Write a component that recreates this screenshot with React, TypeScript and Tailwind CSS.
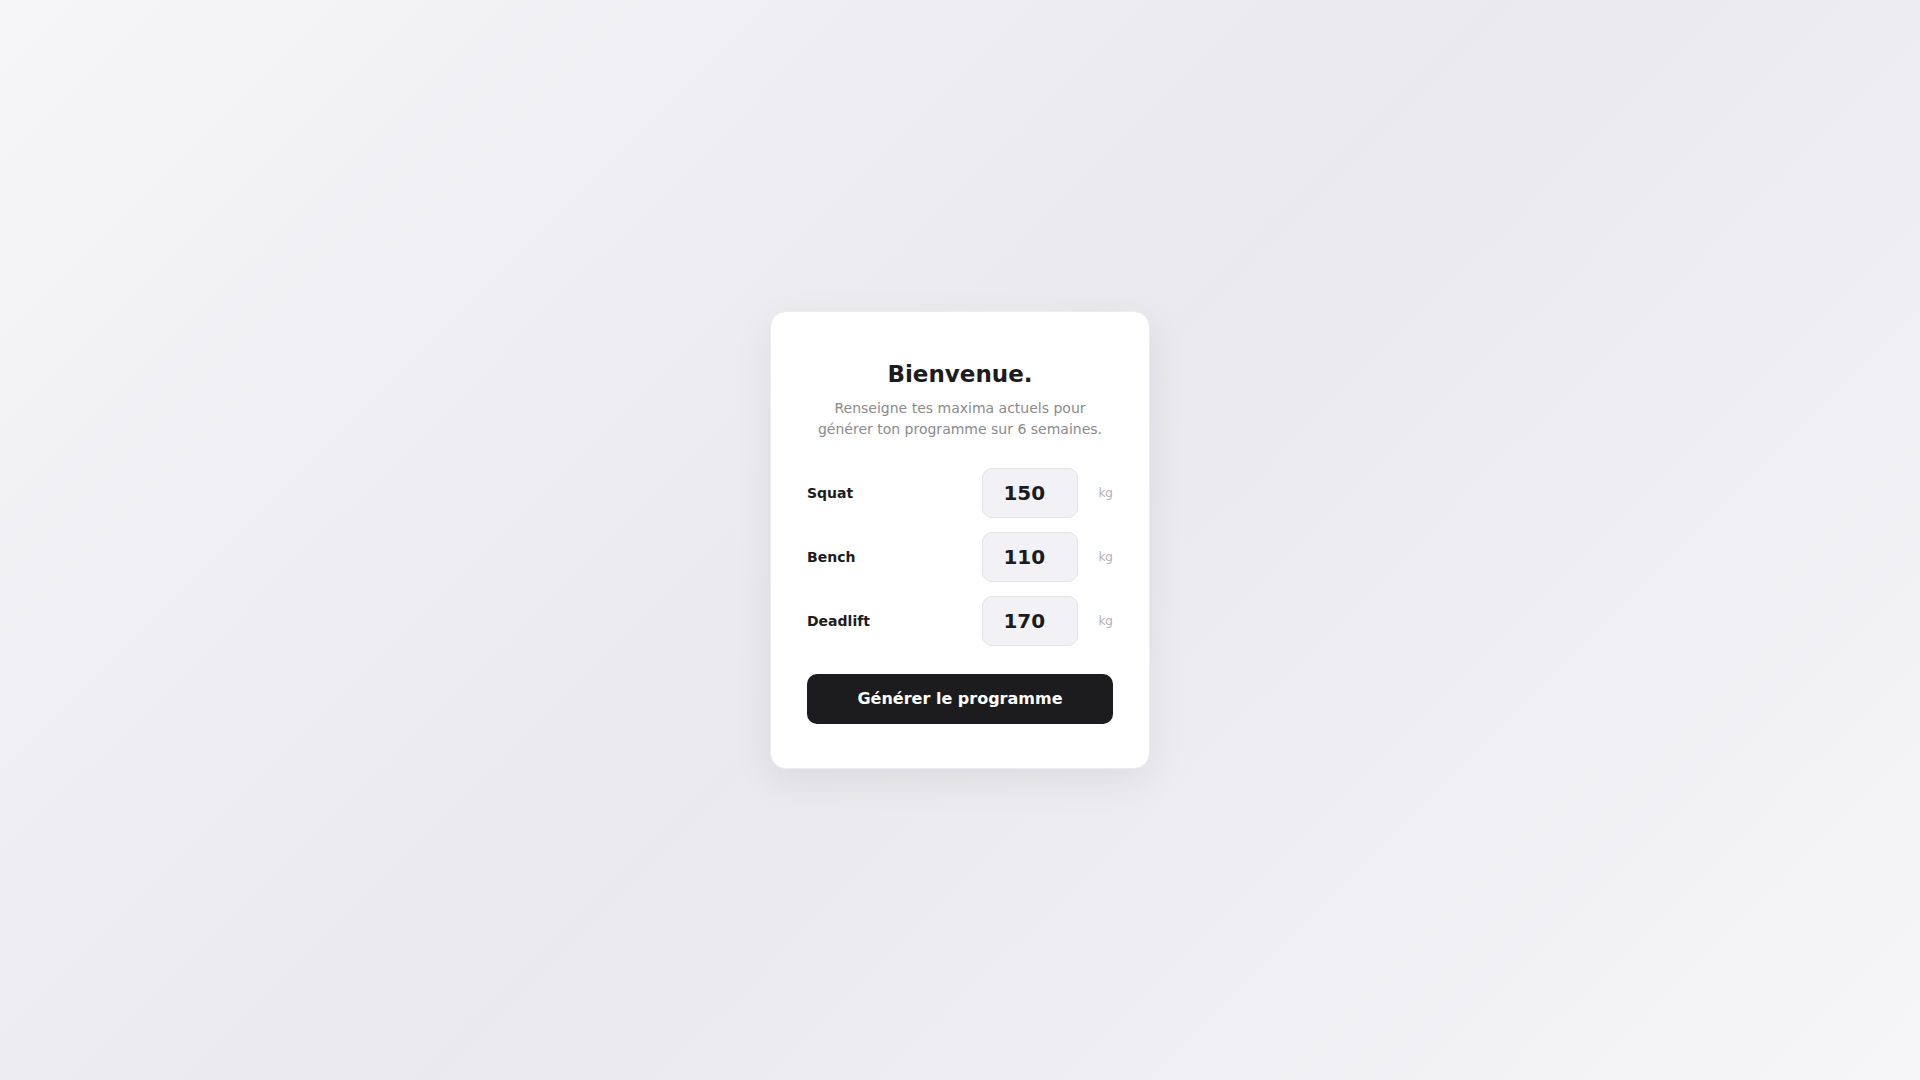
const lifts = [
  { name: "Squat", value: 150 },
  { name: "Bench", value: 110 },
  { name: "Deadlift", value: 170 },
];

export default function App() {
  return (
    <div className="min-h-screen w-full flex items-center justify-center bg-[linear-gradient(135deg,#f6f6f8_0%,#e9e9ee_50%,#f6f6f8_100%)] font-['DejaVu_Sans',sans-serif]">
      <div className="w-[380px] bg-white rounded-2xl border border-[#ececf0] shadow-[0_12px_40px_rgba(20,20,40,0.07)] px-9 pt-[46px] pb-[44px]">
        <h1 className="text-center text-[23px] font-bold text-[#1c1c1e] leading-8">
          Bienvenue.
        </h1>
        <p className="text-center text-sm leading-[21px] text-[#8a8a8e] mt-[8px]">
          Renseigne tes maxima actuels pour
          <br />
          générer ton programme sur 6 semaines.
        </p>

        <div className="mt-[28px] flex flex-col gap-[14px]">
          {lifts.map((l) => (
            <div key={l.name} className="flex items-center">
              <span className="flex-1 text-sm font-bold text-[#1c1c1e]">
                {l.name}
              </span>
              <input
                defaultValue={l.value}
                className="w-24 h-[50px] rounded-[10px] bg-[#f2f2f6] border border-[#e3e3e8] px-5 text-xl font-bold text-[#1c1c1e] outline-none"
              />
              <span className="ml-5 text-xs text-[#b0b0b5]">kg</span>
            </div>
          ))}
        </div>

        <button className="mt-[28px] w-full h-[50px] rounded-[10px] bg-[#1c1c1e] text-white text-base font-bold">
          Générer le programme
        </button>
      </div>
    </div>
  );
}
